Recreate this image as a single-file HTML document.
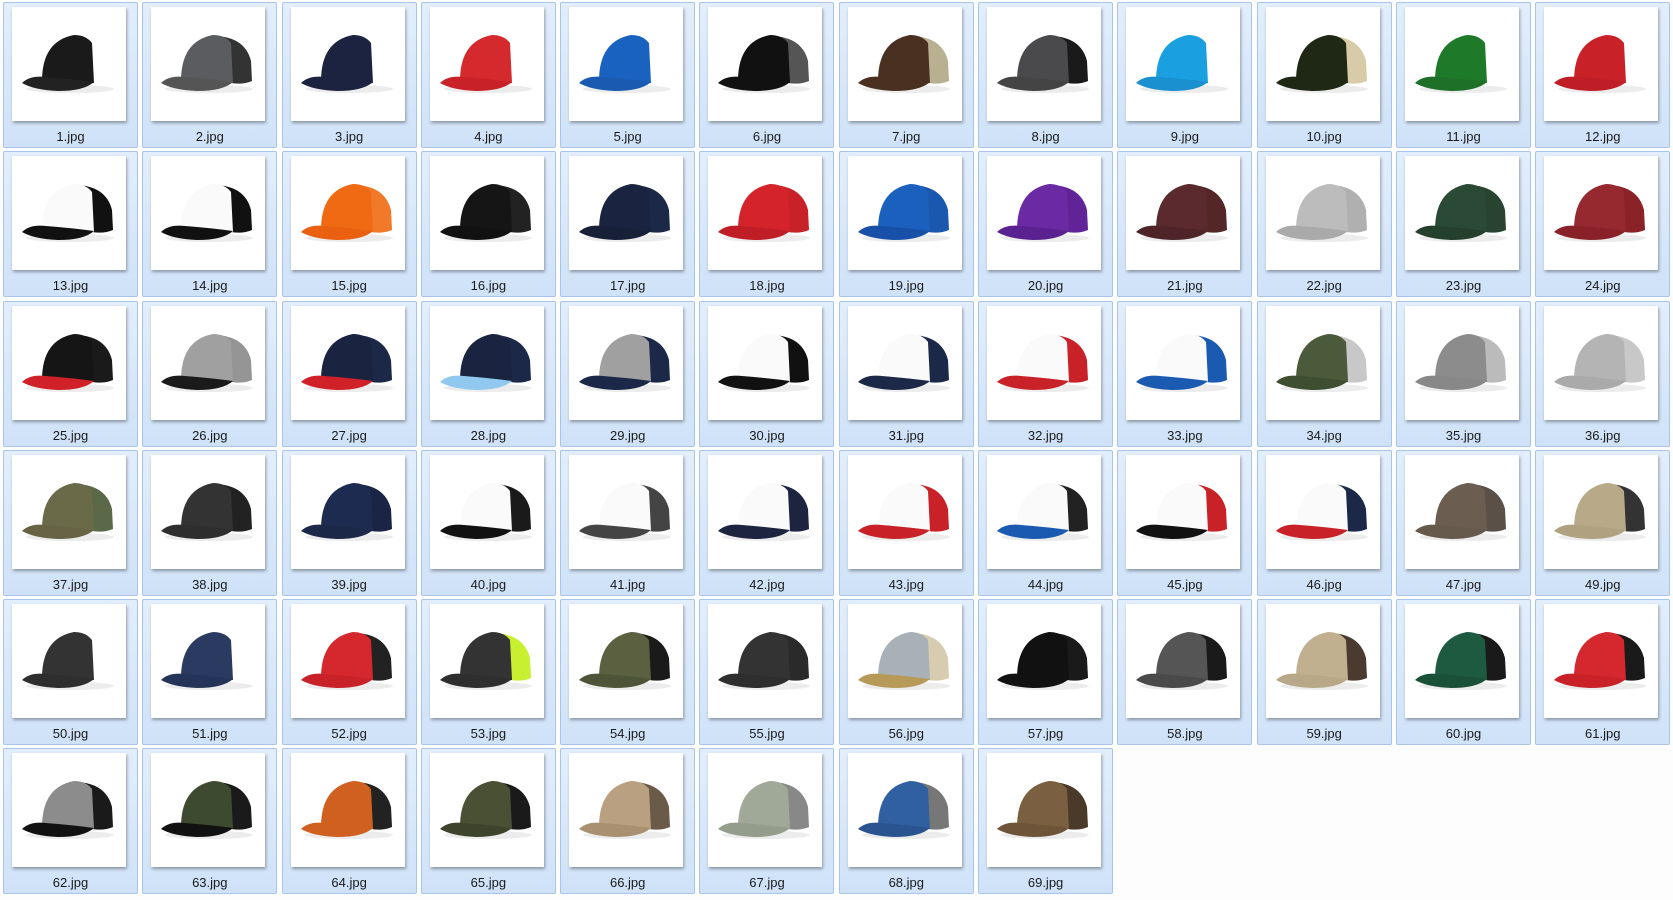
<!DOCTYPE html>
<html><head><meta charset="utf-8"><style>
html,body{margin:0;padding:0;background:#fdfdfd;width:1673px;height:900px;overflow:hidden}
.g{position:absolute;left:3px;top:2px;display:grid;grid-template-columns:repeat(12,135px);column-gap:4.3px;grid-auto-rows:146px;row-gap:3.3px}
.c{box-sizing:border-box;border:1px solid #a8c4e6;border-radius:2px;background:linear-gradient(#e2eefc,#cfe2f8);position:relative}
.t{position:absolute;left:8px;top:4px;width:114px;height:114px;background:#fff;box-shadow:1px 2px 3px rgba(0,0,0,.35)}
.t svg{width:114px;height:114px;display:block}
.l{position:absolute;left:0;right:0;top:126px;text-align:center;font:13px "Liberation Sans",sans-serif;color:#1a1a1a}
</style></head><body>
<svg width="0" height="0" style="position:absolute"><defs>
<symbol id="h" viewBox="0 0 114 114">
<ellipse cx="58" cy="82" rx="44" ry="4" fill="#ececec"/>
<path d="M64 29 Q94 30 100 54 L101 74 Q92 78 80 76 L78 34 Z" fill="var(--b)"/>
<path d="M30 74 Q30 34 62 28 Q74 28 80 36 L82 76 Q56 78 30 74 Z" fill="var(--f)"/>
<path d="M10 76 Q18 68 34 70 Q60 72 82 75 Q72 84 46 84 Q22 83 10 76 Z" fill="var(--r)"/>
</symbol></defs></svg>
<div class="g">
<div class="c"><div class="t"><svg style="--f:#1a1a1a;--b:#fff;--r:#222"><use href="#h"/></svg></div><div class="l">1.jpg</div></div>
<div class="c"><div class="t"><svg style="--f:#5a5c60;--b:#333;--r:#555"><use href="#h"/></svg></div><div class="l">2.jpg</div></div>
<div class="c"><div class="t"><svg style="--f:#1c2340;--b:#fff;--r:#1c2340"><use href="#h"/></svg></div><div class="l">3.jpg</div></div>
<div class="c"><div class="t"><svg style="--f:#d42a2e;--b:#fff;--r:#c82228"><use href="#h"/></svg></div><div class="l">4.jpg</div></div>
<div class="c"><div class="t"><svg style="--f:#1a62c0;--b:#fff;--r:#1a5ab0"><use href="#h"/></svg></div><div class="l">5.jpg</div></div>
<div class="c"><div class="t"><svg style="--f:#111;--b:#555;--r:#111"><use href="#h"/></svg></div><div class="l">6.jpg</div></div>
<div class="c"><div class="t"><svg style="--f:#4a3020;--b:#b8b090;--r:#4a3020"><use href="#h"/></svg></div><div class="l">7.jpg</div></div>
<div class="c"><div class="t"><svg style="--f:#4a4a4c;--b:#1a1a1a;--r:#444"><use href="#h"/></svg></div><div class="l">8.jpg</div></div>
<div class="c"><div class="t"><svg style="--f:#1aa0e0;--b:#fff;--r:#1a90d0"><use href="#h"/></svg></div><div class="l">9.jpg</div></div>
<div class="c"><div class="t"><svg style="--f:#1e2814;--b:#d8cca8;--r:#1e2814"><use href="#h"/></svg></div><div class="l">10.jpg</div></div>
<div class="c"><div class="t"><svg style="--f:#1e7a28;--b:#fff;--r:#1e7028"><use href="#h"/></svg></div><div class="l">11.jpg</div></div>
<div class="c"><div class="t"><svg style="--f:#c82228;--b:#fff;--r:#c01e26"><use href="#h"/></svg></div><div class="l">12.jpg</div></div>
<div class="c"><div class="t"><svg style="--f:#fafafa;--b:#111;--r:#111"><use href="#h"/></svg></div><div class="l">13.jpg</div></div>
<div class="c"><div class="t"><svg style="--f:#fafafa;--b:#111;--r:#111"><use href="#h"/></svg></div><div class="l">14.jpg</div></div>
<div class="c"><div class="t"><svg style="--f:#f06a14;--b:#f07a2a;--r:#e86010"><use href="#h"/></svg></div><div class="l">15.jpg</div></div>
<div class="c"><div class="t"><svg style="--f:#151515;--b:#222;--r:#111"><use href="#h"/></svg></div><div class="l">16.jpg</div></div>
<div class="c"><div class="t"><svg style="--f:#1a2340;--b:#1c2848;--r:#182038"><use href="#h"/></svg></div><div class="l">17.jpg</div></div>
<div class="c"><div class="t"><svg style="--f:#d4232b;--b:#c82228;--r:#c01e26"><use href="#h"/></svg></div><div class="l">18.jpg</div></div>
<div class="c"><div class="t"><svg style="--f:#1b60bc;--b:#1a58b0;--r:#1850a8"><use href="#h"/></svg></div><div class="l">19.jpg</div></div>
<div class="c"><div class="t"><svg style="--f:#6a2aa4;--b:#602498;--r:#5a2290"><use href="#h"/></svg></div><div class="l">20.jpg</div></div>
<div class="c"><div class="t"><svg style="--f:#5a2a2e;--b:#542628;--r:#4e2428"><use href="#h"/></svg></div><div class="l">21.jpg</div></div>
<div class="c"><div class="t"><svg style="--f:#bcbcbc;--b:#b0b0b0;--r:#aaa"><use href="#h"/></svg></div><div class="l">22.jpg</div></div>
<div class="c"><div class="t"><svg style="--f:#2b4a36;--b:#284430;--r:#24402c"><use href="#h"/></svg></div><div class="l">23.jpg</div></div>
<div class="c"><div class="t"><svg style="--f:#962830;--b:#8b2228;--r:#882228"><use href="#h"/></svg></div><div class="l">24.jpg</div></div>
<div class="c"><div class="t"><svg style="--f:#151515;--b:#1a1a1a;--r:#d02028"><use href="#h"/></svg></div><div class="l">25.jpg</div></div>
<div class="c"><div class="t"><svg style="--f:#a0a0a0;--b:#959595;--r:#1a1a1a"><use href="#h"/></svg></div><div class="l">26.jpg</div></div>
<div class="c"><div class="t"><svg style="--f:#1a2340;--b:#1c2848;--r:#d02028"><use href="#h"/></svg></div><div class="l">27.jpg</div></div>
<div class="c"><div class="t"><svg style="--f:#1a2340;--b:#1c2848;--r:#90c8f0"><use href="#h"/></svg></div><div class="l">28.jpg</div></div>
<div class="c"><div class="t"><svg style="--f:#a0a0a0;--b:#1c2848;--r:#1c2848"><use href="#h"/></svg></div><div class="l">29.jpg</div></div>
<div class="c"><div class="t"><svg style="--f:#fafafa;--b:#111;--r:#111"><use href="#h"/></svg></div><div class="l">30.jpg</div></div>
<div class="c"><div class="t"><svg style="--f:#fafafa;--b:#1c2848;--r:#1c2848"><use href="#h"/></svg></div><div class="l">31.jpg</div></div>
<div class="c"><div class="t"><svg style="--f:#fafafa;--b:#c82228;--r:#c82228"><use href="#h"/></svg></div><div class="l">32.jpg</div></div>
<div class="c"><div class="t"><svg style="--f:#fafafa;--b:#1a5ab0;--r:#1a5ab0"><use href="#h"/></svg></div><div class="l">33.jpg</div></div>
<div class="c"><div class="t"><svg style="--f:#4a5a3a;--b:#c8c8c8;--r:#3e4e30"><use href="#h"/></svg></div><div class="l">34.jpg</div></div>
<div class="c"><div class="t"><svg style="--f:#8c8c8c;--b:#bbb;--r:#888"><use href="#h"/></svg></div><div class="l">35.jpg</div></div>
<div class="c"><div class="t"><svg style="--f:#b4b4b4;--b:#c8c8c8;--r:#aaa"><use href="#h"/></svg></div><div class="l">36.jpg</div></div>
<div class="c"><div class="t"><svg style="--f:#6b6a48;--b:#5a6a48;--r:#666444"><use href="#h"/></svg></div><div class="l">37.jpg</div></div>
<div class="c"><div class="t"><svg style="--f:#333;--b:#222;--r:#2e2e2e"><use href="#h"/></svg></div><div class="l">38.jpg</div></div>
<div class="c"><div class="t"><svg style="--f:#1e2b50;--b:#1a2444;--r:#1c2848"><use href="#h"/></svg></div><div class="l">39.jpg</div></div>
<div class="c"><div class="t"><svg style="--f:#fafafa;--b:#1a1a1a;--r:#111"><use href="#h"/></svg></div><div class="l">40.jpg</div></div>
<div class="c"><div class="t"><svg style="--f:#fafafa;--b:#444;--r:#444"><use href="#h"/></svg></div><div class="l">41.jpg</div></div>
<div class="c"><div class="t"><svg style="--f:#fafafa;--b:#1c2440;--r:#1c2440"><use href="#h"/></svg></div><div class="l">42.jpg</div></div>
<div class="c"><div class="t"><svg style="--f:#fafafa;--b:#c82228;--r:#c82228"><use href="#h"/></svg></div><div class="l">43.jpg</div></div>
<div class="c"><div class="t"><svg style="--f:#fafafa;--b:#222;--r:#1a5ab0"><use href="#h"/></svg></div><div class="l">44.jpg</div></div>
<div class="c"><div class="t"><svg style="--f:#fafafa;--b:#c82228;--r:#111"><use href="#h"/></svg></div><div class="l">45.jpg</div></div>
<div class="c"><div class="t"><svg style="--f:#fafafa;--b:#1c2848;--r:#c82228"><use href="#h"/></svg></div><div class="l">46.jpg</div></div>
<div class="c"><div class="t"><svg style="--f:#6b5e50;--b:#5a5048;--r:#665a4c"><use href="#h"/></svg></div><div class="l">47.jpg</div></div>
<div class="c"><div class="t"><svg style="--f:#b8aa88;--b:#333;--r:#b0a280"><use href="#h"/></svg></div><div class="l">49.jpg</div></div>
<div class="c"><div class="t"><svg style="--f:#333;--b:#fff;--r:#2e2e2e"><use href="#h"/></svg></div><div class="l">50.jpg</div></div>
<div class="c"><div class="t"><svg style="--f:#2a3a60;--b:#fff;--r:#243458"><use href="#h"/></svg></div><div class="l">51.jpg</div></div>
<div class="c"><div class="t"><svg style="--f:#d4282e;--b:#222;--r:#c82228"><use href="#h"/></svg></div><div class="l">52.jpg</div></div>
<div class="c"><div class="t"><svg style="--f:#333;--b:#c8f030;--r:#2e2e2e"><use href="#h"/></svg></div><div class="l">53.jpg</div></div>
<div class="c"><div class="t"><svg style="--f:#5a6040;--b:#1a1a1a;--r:#4e5438"><use href="#h"/></svg></div><div class="l">54.jpg</div></div>
<div class="c"><div class="t"><svg style="--f:#333;--b:#2a2a2a;--r:#2e2e2e"><use href="#h"/></svg></div><div class="l">55.jpg</div></div>
<div class="c"><div class="t"><svg style="--f:#a8b0b8;--b:#d8ccb0;--r:#b89a58"><use href="#h"/></svg></div><div class="l">56.jpg</div></div>
<div class="c"><div class="t"><svg style="--f:#111;--b:#1a1a1a;--r:#111"><use href="#h"/></svg></div><div class="l">57.jpg</div></div>
<div class="c"><div class="t"><svg style="--f:#555;--b:#1a1a1a;--r:#4a4a4a"><use href="#h"/></svg></div><div class="l">58.jpg</div></div>
<div class="c"><div class="t"><svg style="--f:#c0b090;--b:#4a3a30;--r:#b8a888"><use href="#h"/></svg></div><div class="l">59.jpg</div></div>
<div class="c"><div class="t"><svg style="--f:#1e5a40;--b:#1a1a1a;--r:#1a5038"><use href="#h"/></svg></div><div class="l">60.jpg</div></div>
<div class="c"><div class="t"><svg style="--f:#d4282e;--b:#1a1a1a;--r:#c82228"><use href="#h"/></svg></div><div class="l">61.jpg</div></div>
<div class="c"><div class="t"><svg style="--f:#8c8c8c;--b:#1a1a1a;--r:#111"><use href="#h"/></svg></div><div class="l">62.jpg</div></div>
<div class="c"><div class="t"><svg style="--f:#3e4a30;--b:#1a1a1a;--r:#111"><use href="#h"/></svg></div><div class="l">63.jpg</div></div>
<div class="c"><div class="t"><svg style="--f:#d06020;--b:#222;--r:#d06020"><use href="#h"/></svg></div><div class="l">64.jpg</div></div>
<div class="c"><div class="t"><svg style="--f:#4a5034;--b:#1a1a1a;--r:#3e442c"><use href="#h"/></svg></div><div class="l">65.jpg</div></div>
<div class="c"><div class="t"><svg style="--f:#b8a080;--b:#6a5a48;--r:#a89070"><use href="#h"/></svg></div><div class="l">66.jpg</div></div>
<div class="c"><div class="t"><svg style="--f:#a0a898;--b:#888;--r:#949c8c"><use href="#h"/></svg></div><div class="l">67.jpg</div></div>
<div class="c"><div class="t"><svg style="--f:#3060a0;--b:#777;--r:#2a5490"><use href="#h"/></svg></div><div class="l">68.jpg</div></div>
<div class="c"><div class="t"><svg style="--f:#7a6040;--b:#4a3a2a;--r:#6e5438"><use href="#h"/></svg></div><div class="l">69.jpg</div></div>
</div>
</body></html>
